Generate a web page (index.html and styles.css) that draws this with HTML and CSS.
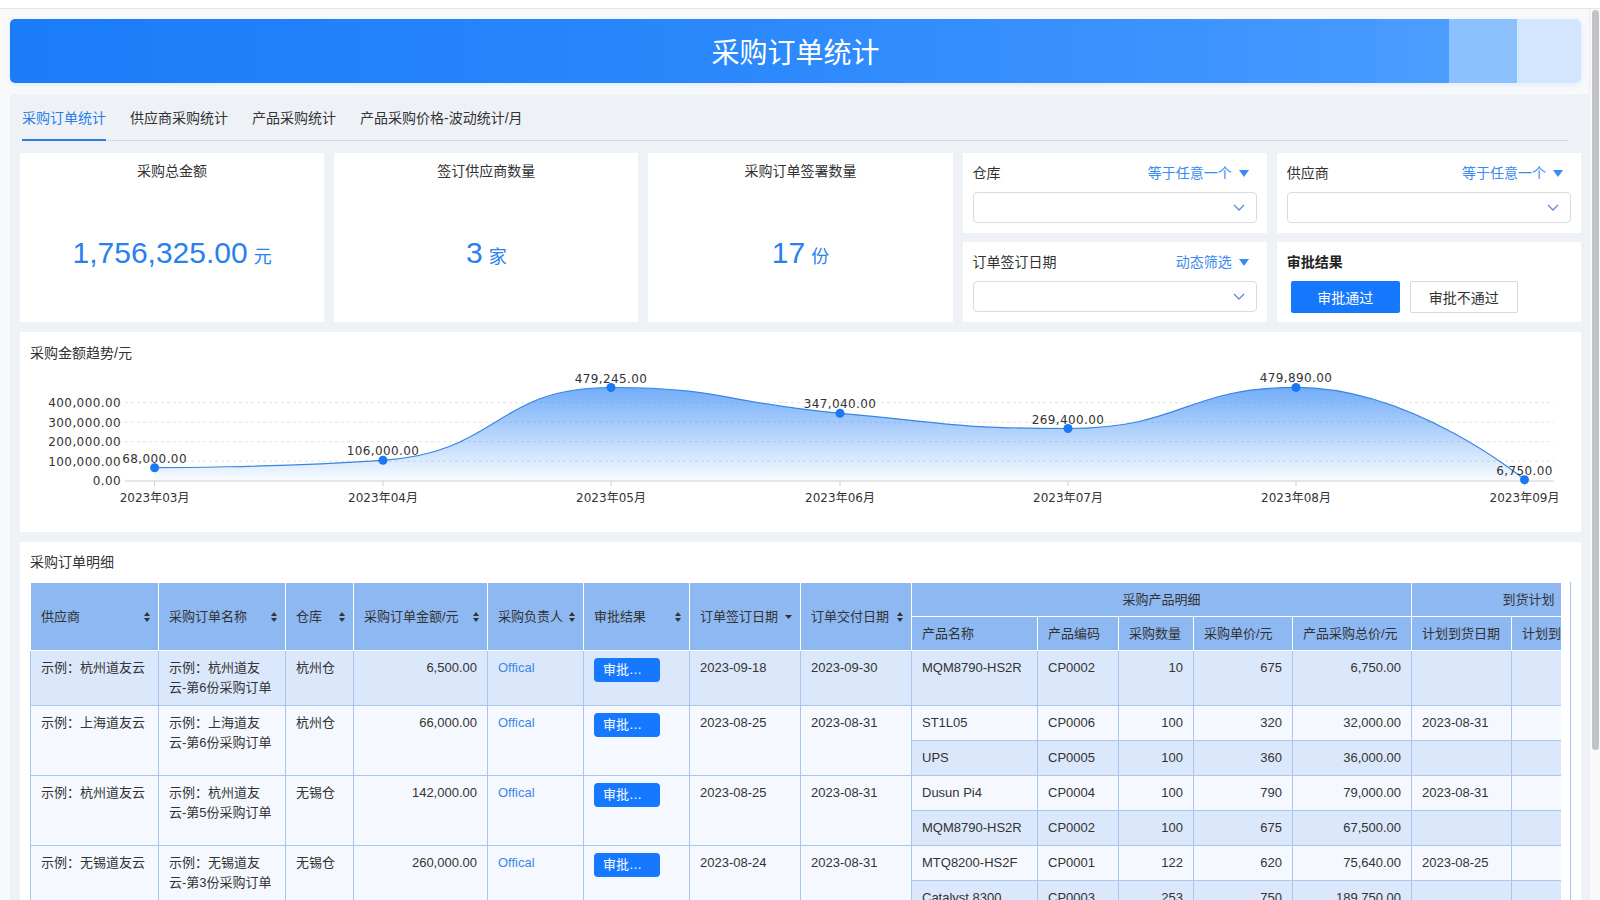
FILE: index.html
```html
<!DOCTYPE html>
<html lang="zh-CN">
<head>
<meta charset="utf-8">
<title>采购订单统计</title>
<link rel="stylesheet" href="styles.css">
</head>
<body>
<div class="topbar"></div>
<div class="frame">
  <div class="viewport">
    <header class="banner"><h1>采购订单统计</h1></header>
    <section class="panel">
      <nav class="tabs">
        <span class="tab active">采购订单统计</span>
        <span class="tab">供应商采购统计</span>
        <span class="tab">产品采购统计</span>
        <span class="tab">产品采购价格-波动统计/月</span>
      </nav>
      <div class="content">
        <div class="overview">
          <div class="stat">
            <div class="stat-title">采购总金额</div>
            <div class="stat-value"><div class="val"><span class="num">1,756,325.00</span><span class="unit">元</span></div></div>
          </div>
          <div class="stat">
            <div class="stat-title">签订供应商数量</div>
            <div class="stat-value"><div class="val"><span class="num">3</span><span class="unit">家</span></div></div>
          </div>
          <div class="stat">
            <div class="stat-title">采购订单签署数量</div>
            <div class="stat-value"><div class="val"><span class="num">17</span><span class="unit">份</span></div></div>
          </div>
          <div class="filter">
            <div class="filter-head">
              <span class="filter-label">仓库</span>
              <span class="filter-mode">等于任意一个<svg width="10" height="7" viewBox="0 0 10 7"><path d="M0 0H10L5 7z" fill="#3a8af0"/></svg></span>
            </div>
            <div class="select"><svg width="12" height="7" viewBox="0 0 12 7"><path d="M1 1L6 6L11 1" fill="none" stroke="#5f8bd0" stroke-width="1.3"/></svg></div>
          </div>
          <div class="filter">
            <div class="filter-head">
              <span class="filter-label">供应商</span>
              <span class="filter-mode">等于任意一个<svg width="10" height="7" viewBox="0 0 10 7"><path d="M0 0H10L5 7z" fill="#3a8af0"/></svg></span>
            </div>
            <div class="select"><svg width="12" height="7" viewBox="0 0 12 7"><path d="M1 1L6 6L11 1" fill="none" stroke="#5f8bd0" stroke-width="1.3"/></svg></div>
          </div>
          <div class="filter">
            <div class="filter-head">
              <span class="filter-label">订单签订日期</span>
              <span class="filter-mode">动态筛选<svg width="10" height="7" viewBox="0 0 10 7"><path d="M0 0H10L5 7z" fill="#3a8af0"/></svg></span>
            </div>
            <div class="select"><svg width="12" height="7" viewBox="0 0 12 7"><path d="M1 1L6 6L11 1" fill="none" stroke="#5f8bd0" stroke-width="1.3"/></svg></div>
          </div>
          <div class="filter">
            <div class="filter-head">
              <span class="filter-label strong">审批结果</span>
            </div>
            <div class="btns">
              <span class="btn primary">审批通过</span>
              <span class="btn default">审批不通过</span>
            </div>
          </div>
        </div>

        <div class="card chart-card">
          <div class="card-title">采购金额趋势/元</div>
          <svg class="chart" width="1561" height="160" viewBox="20 372 1561 160">
            <defs>
              <linearGradient id="areaFill" x1="0" y1="387" x2="0" y2="481" gradientUnits="userSpaceOnUse">
                <stop offset="0" stop-color="#2f86f6" stop-opacity="0.68"/>
                <stop offset="1" stop-color="#2f86f6" stop-opacity="0.03"/>
              </linearGradient>
            </defs>
            <g stroke="#e2e2e2" stroke-dasharray="3 3">
              <line x1="125" y1="402.7" x2="1554" y2="402.7"/>
              <line x1="125" y1="422.2" x2="1554" y2="422.2"/>
              <line x1="125" y1="441.7" x2="1554" y2="441.7"/>
              <line x1="125" y1="461.2" x2="1554" y2="461.2"/>
            </g>
            <path d="M154.6 467.7 C154.6 467.7 271.6 467.7 383 460.3 C499.7 452.55 494.6 387.5 611 387.5 C723.1 387.5 725.25 403 840 413.3 C953.8 423.5 954.8 428.5 1068 428.5 C1182.8 428.5 1185.4 387.4 1296 387.4 C1413.6 387.4 1524.5 479.7 1524.5 479.7 L1524.5 481 L154.6 481 Z" fill="url(#areaFill)"/>
            <line x1="125" y1="481" x2="1554" y2="481" stroke="#cfcfcf"/>
            <g stroke="#cfcfcf">
              <line x1="154.6" y1="481" x2="154.6" y2="486"/>
              <line x1="383" y1="481" x2="383" y2="486"/>
              <line x1="611" y1="481" x2="611" y2="486"/>
              <line x1="840" y1="481" x2="840" y2="486"/>
              <line x1="1068" y1="481" x2="1068" y2="486"/>
              <line x1="1296" y1="481" x2="1296" y2="486"/>
              <line x1="1524.5" y1="481" x2="1524.5" y2="486"/>
            </g>
            <path d="M154.6 467.7 C154.6 467.7 271.6 467.7 383 460.3 C499.7 452.55 494.6 387.5 611 387.5 C723.1 387.5 725.25 403 840 413.3 C953.8 423.5 954.8 428.5 1068 428.5 C1182.8 428.5 1185.4 387.4 1296 387.4 C1413.6 387.4 1524.5 479.7 1524.5 479.7" fill="none" stroke="#3a85e6" stroke-width="1.2"/>
            <g fill="#1a78f2">
              <circle cx="154.6" cy="467.7" r="4.5"/>
              <circle cx="383" cy="460.3" r="4.5"/>
              <circle cx="611" cy="387.5" r="4.5"/>
              <circle cx="840" cy="413.3" r="4.5"/>
              <circle cx="1068" cy="428.5" r="4.5"/>
              <circle cx="1296" cy="387.4" r="4.5"/>
              <circle cx="1524.5" cy="479.7" r="4.5"/>
            </g>
            <g class="ylab" text-anchor="end">
              <text x="121" y="407">400,000.00</text>
              <text x="121" y="426.5">300,000.00</text>
              <text x="121" y="446">200,000.00</text>
              <text x="121" y="465.5">100,000.00</text>
              <text x="121" y="485">0.00</text>
            </g>
            <g class="xlab" text-anchor="middle">
              <text x="154.6" y="501.5">2023年03月</text>
              <text x="383" y="501.5">2023年04月</text>
              <text x="611" y="501.5">2023年05月</text>
              <text x="840" y="501.5">2023年06月</text>
              <text x="1068" y="501.5">2023年07月</text>
              <text x="1296" y="501.5">2023年08月</text>
              <text x="1524.5" y="501.5">2023年09月</text>
            </g>
            <g class="dlab" text-anchor="middle">
              <text x="154.6" y="462.7">68,000.00</text>
              <text x="383" y="455.3">106,000.00</text>
              <text x="611" y="382.5">479,245.00</text>
              <text x="840" y="408.3">347,040.00</text>
              <text x="1068" y="423.5">269,400.00</text>
              <text x="1296" y="382.4">479,890.00</text>
              <text x="1524.5" y="474.7">6,750.00</text>
            </g>
          </svg>
        </div>

        <div class="card table-card">
          <div class="card-title">采购订单明细</div>
          <div class="tablewrap">
            <div class="tablescroll">
              <table class="grid">
                <colgroup>
                  <col style="width:128px"><col style="width:127px"><col style="width:68px"><col style="width:134px"><col style="width:96px"><col style="width:106px"><col style="width:111px"><col style="width:111px"><col style="width:126px"><col style="width:81px"><col style="width:75px"><col style="width:99px"><col style="width:119px"><col style="width:100px"><col style="width:134px">
                </colgroup>
                <thead>
                  <tr>
                    <th rowspan="2"><div class="th"><span>供应商</span><svg class="sort" width="6" height="10" viewBox="0 0 6 10"><path d="M3 0L6 4H0z M0 6H6L3 10z"/></svg></div></th>
                    <th rowspan="2"><div class="th"><span>采购订单名称</span><svg class="sort" width="6" height="10" viewBox="0 0 6 10"><path d="M3 0L6 4H0z M0 6H6L3 10z"/></svg></div></th>
                    <th rowspan="2"><div class="th"><span>仓库</span><svg class="sort" width="6" height="10" viewBox="0 0 6 10"><path d="M3 0L6 4H0z M0 6H6L3 10z"/></svg></div></th>
                    <th rowspan="2"><div class="th"><span>采购订单金额/元</span><svg class="sort" width="6" height="10" viewBox="0 0 6 10"><path d="M3 0L6 4H0z M0 6H6L3 10z"/></svg></div></th>
                    <th rowspan="2"><div class="th"><span>采购负责人</span><svg class="sort" width="6" height="10" viewBox="0 0 6 10"><path d="M3 0L6 4H0z M0 6H6L3 10z"/></svg></div></th>
                    <th rowspan="2"><div class="th"><span>审批结果</span><svg class="sort" width="6" height="10" viewBox="0 0 6 10"><path d="M3 0L6 4H0z M0 6H6L3 10z"/></svg></div></th>
                    <th rowspan="2"><div class="th"><span>订单签订日期</span><svg class="sort" width="7" height="4" viewBox="0 0 7 4"><path d="M0 0H7L3.5 4z"/></svg></div></th>
                    <th rowspan="2"><div class="th"><span>订单交付日期</span><svg class="sort" width="6" height="10" viewBox="0 0 6 10"><path d="M3 0L6 4H0z M0 6H6L3 10z"/></svg></div></th>
                    <th colspan="5" class="group">采购产品明细</th>
                    <th colspan="2" class="group">到货计划</th>
                  </tr>
                  <tr>
                    <th>产品名称</th>
                    <th>产品编码</th>
                    <th>采购数量</th>
                    <th>采购单价/元</th>
                    <th>产品采购总价/元</th>
                    <th>计划到货日期</th>
                    <th>计划到货数量</th>
                  </tr>
                </thead>
                <tbody>
                  <tr class="hl">
                    <td>示例：杭州道友云</td>
                    <td>示例：杭州道友<br>云-第6份采购订单</td>
                    <td>杭州仓</td>
                    <td class="r">6,500.00</td>
                    <td><span class="link">Offical</span></td>
                    <td><span class="tag">审批…</span></td>
                    <td>2023-09-18</td>
                    <td>2023-09-30</td>
                    <td>MQM8790-HS2R</td>
                    <td>CP0002</td>
                    <td class="r">10</td>
                    <td class="r">675</td>
                    <td class="r">6,750.00</td>
                    <td></td>
                    <td></td>
                  </tr>
                  <tr>
                    <td rowspan="2">示例：上海道友云</td>
                    <td rowspan="2">示例：上海道友<br>云-第6份采购订单</td>
                    <td rowspan="2">杭州仓</td>
                    <td rowspan="2" class="r">66,000.00</td>
                    <td rowspan="2"><span class="link">Offical</span></td>
                    <td rowspan="2"><span class="tag">审批…</span></td>
                    <td rowspan="2">2023-08-25</td>
                    <td rowspan="2">2023-08-31</td>
                    <td>ST1L05</td>
                    <td>CP0006</td>
                    <td class="r">100</td>
                    <td class="r">320</td>
                    <td class="r">32,000.00</td>
                    <td>2023-08-31</td>
                    <td></td>
                  </tr>
                  <tr class="sub">
                    <td>UPS</td>
                    <td>CP0005</td>
                    <td class="r">100</td>
                    <td class="r">360</td>
                    <td class="r">36,000.00</td>
                    <td></td>
                    <td></td>
                  </tr>
                  <tr>
                    <td rowspan="2">示例：杭州道友云</td>
                    <td rowspan="2">示例：杭州道友<br>云-第5份采购订单</td>
                    <td rowspan="2">无锡仓</td>
                    <td rowspan="2" class="r">142,000.00</td>
                    <td rowspan="2"><span class="link">Offical</span></td>
                    <td rowspan="2"><span class="tag">审批…</span></td>
                    <td rowspan="2">2023-08-25</td>
                    <td rowspan="2">2023-08-31</td>
                    <td>Dusun Pi4</td>
                    <td>CP0004</td>
                    <td class="r">100</td>
                    <td class="r">790</td>
                    <td class="r">79,000.00</td>
                    <td>2023-08-31</td>
                    <td></td>
                  </tr>
                  <tr class="sub">
                    <td>MQM8790-HS2R</td>
                    <td>CP0002</td>
                    <td class="r">100</td>
                    <td class="r">675</td>
                    <td class="r">67,500.00</td>
                    <td></td>
                    <td></td>
                  </tr>
                  <tr>
                    <td rowspan="2">示例：无锡道友云</td>
                    <td rowspan="2">示例：无锡道友<br>云-第3份采购订单</td>
                    <td rowspan="2">无锡仓</td>
                    <td rowspan="2" class="r">260,000.00</td>
                    <td rowspan="2"><span class="link">Offical</span></td>
                    <td rowspan="2"><span class="tag">审批…</span></td>
                    <td rowspan="2">2023-08-24</td>
                    <td rowspan="2">2023-08-31</td>
                    <td>MTQ8200-HS2F</td>
                    <td>CP0001</td>
                    <td class="r">122</td>
                    <td class="r">620</td>
                    <td class="r">75,640.00</td>
                    <td>2023-08-25</td>
                    <td></td>
                  </tr>
                  <tr class="sub">
                    <td>Catalyst 8300</td>
                    <td>CP0003</td>
                    <td class="r">253</td>
                    <td class="r">750</td>
                    <td class="r">189,750.00</td>
                    <td></td>
                    <td></td>
                  </tr>
                </tbody>
              </table>
            </div>
          </div>
        </div>
      </div>
    </section>
  </div>
  <div class="scrollbar"><div class="thumb"></div></div>
</div>
</body>
</html>
```
FILE: styles.css
```css
* { box-sizing: border-box; }
html, body { margin: 0; height: 100%; }
body {
  overflow: hidden;
  background: #fff;
  font-family: "Liberation Sans", "Noto Sans CJK SC", sans-serif;
  font-size: 14px;
  color: #333;
}

.topbar { height: 9px; background: #fff; border-bottom: 1px solid #e3e5e8; }
.frame { display: flex; height: 891px; }
.viewport { flex: 1; overflow: hidden; background: #f8f9fb; }
.scrollbar { width: 11px; background: #f9f9fa; border-left: 1px solid #eceef1; padding: 1px 1px 0 2px; }
.thumb { height: 740px; border-radius: 4px; background: #c1c2c7; }

.banner {
  height: 64px;
  margin: 10px 8px 0 10px;
  border-radius: 5px;
  background: linear-gradient(90deg, #1b7cf8 0%, #2a88fc 45%, #4598ff 86.9%, #4a9bff 87%, #4c9dff 91.6%, #8dc1fd 91.6%, #8dc1fd 95.9%, #d2e6fd 95.9%);
  display: flex;
  align-items: center;
  justify-content: center;
  box-shadow: 0 2px 6px rgba(30, 120, 250, 0.10);
}
.banner h1 { margin: 0; font-size: 28px; font-weight: 400; color: #fff; }

.panel { margin: 11px 0 0 10px; background: #eef2f7; min-height: 1100px; }
.tabs {
  display: flex;
  gap: 24px;
  margin: 0 21px 0 12px;
  padding-top: 14px;
  border-bottom: 1px solid #d5dae2;
}
.tab { position: relative; line-height: 20px; padding-bottom: 12px; font-size: 14px; color: #333; }
.tab.active { color: #2a7ee6; }
.tab.active::after {
  content: "";
  position: absolute;
  left: 0; right: 0; bottom: -1px;
  height: 2px;
  background: #2a7ee6;
}

.content { padding: 12px 8px 10px 10px; }

.overview {
  display: grid;
  grid-template-columns: repeat(5, 1fr);
  grid-template-rows: 80px 80px;
  gap: 9px 10px;
}
.stat {
  grid-row: span 2;
  background: #fff;
  display: flex;
  flex-direction: column;
  align-items: center;
  padding-top: 8px;
}
.stat-title { line-height: 20px; font-size: 14px; color: #333; }
.stat-value { flex: 1; display: flex; align-items: center; justify-content: center; color: #2b7fef; padding-top: 2px; }
.val { display: flex; align-items: baseline; gap: 6px; }
.num { font-size: 30px; }
.unit { font-size: 18px; }

.filter { background: #fff; padding: 10px 10px 0 10px; }
.filter-head { display: flex; justify-content: space-between; align-items: center; height: 20px; line-height: 20px; }
.filter-label { font-size: 14px; color: #333; }
.filter-label.strong { font-weight: 700; color: #222; }
.filter-mode { display: flex; align-items: center; gap: 7px; padding-right: 8px; color: #3a8af0; font-size: 14px; }
.select {
  margin-top: 9px;
  height: 31px;
  border: 1px solid #d9dbe0;
  border-radius: 4px;
  display: flex;
  align-items: center;
  justify-content: flex-end;
  padding-right: 11px;
}
.btns { margin-top: 9px; display: flex; gap: 10px; padding-left: 4px; }
.btn { height: 32px; display: flex; align-items: center; justify-content: center; font-size: 14px; border-radius: 2px; }
.btn.primary { width: 109px; background: #1677ff; color: #fff; }
.btn.default { width: 108px; border: 1px solid #d9d9d9; background: #fff; color: #333; }

.card { background: #fff; margin-top: 10px; }
.card-title { font-size: 14px; line-height: 20px; color: #333; padding: 11px 10px 0; }
.chart-card .card-title { margin-bottom: 9px; }
.chart { display: block; }
.chart text { font-family: "DejaVu Sans", "Noto Sans CJK SC", sans-serif; font-size: 12px; fill: #333; }
.chart .ylab text, .chart .dlab text { letter-spacing: 0.4px; }

.table-card { padding-bottom: 10px; }
.table-card .card-title { padding-top: 10px; margin-bottom: 10px; }
.tablewrap { margin: 0 10px; border-right: 1px solid #a9c7ee; padding-right: 9px; }
.tablescroll { overflow: hidden; }

table.grid { border-collapse: collapse; table-layout: fixed; width: 1615px; font-size: 13px; }
.grid th {
  background: #8db8f1;
  color: #333;
  font-weight: 400;
  border: 1px solid #fff;
  padding: 7px 10px 6px;
  line-height: 20px;
  text-align: left;
  vertical-align: middle;
  white-space: nowrap;
  overflow: hidden;
}
.grid th.group { text-align: center; }
.th { display: flex; justify-content: space-between; align-items: center; margin-right: -2px; }
.sort { fill: #333; flex: none; }
.grid td {
  border: 1px solid #a9c7ee;
  padding: 7px 10px;
  line-height: 20px;
  vertical-align: top;
  background: #f5f9ff;
  color: #333;
  white-space: nowrap;
}
.grid tr.hl td, .grid tr.sub td { background: #dbe8fb; }
.grid td.r { text-align: right; }
.link { color: #3c87e8; }
.tag {
  display: block;
  width: 66px;
  height: 24px;
  line-height: 24px;
  padding-left: 9px;
  border-radius: 4px;
  background: #1677ff;
  color: #fff;
  font-size: 13px;
}
```
